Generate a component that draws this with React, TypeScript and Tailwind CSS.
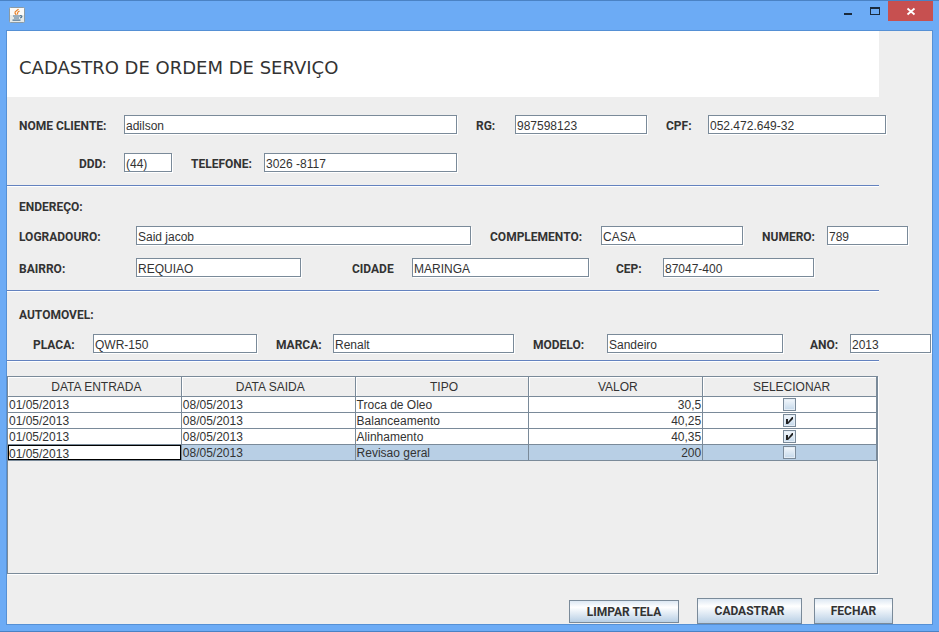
import { ReactNode } from "react";

type FieldProps = {
  id: string;
  label: string;
  value: string;
  labelClass: string;
  grow: string;
};

function Field({ id, label, value, labelClass, grow }: FieldProps) {
  return (
    <>
      <label htmlFor={id} className={`shrink-0 pt-[2px] font-[Roboto,sans-serif] font-bold whitespace-nowrap ${labelClass}`}>
        {label}
      </label>
      <input
        id={id}
        type="text"
        defaultValue={value}
        className={`h-[19px] min-w-0 border border-[#7a8a99] bg-white pt-[2px] pl-px text-xs leading-[15px] shadow-[1px_1px_0_#ffffff] outline-none ${grow}`}
      />
    </>
  );
}

function Row({ children }: { children: ReactNode }) {
  return <div className="flex h-[19px] items-center pl-3">{children}</div>;
}

function Separator() {
  return <hr className="mr-[53px] h-[2px] border-0 border-t border-[#6382bf] bg-white" />;
}

function SectionTitle({ children }: { children: ReactNode }) {
  return <h2 className="pl-3 font-[Roboto,sans-serif] text-xs leading-4 font-bold">{children}</h2>;
}

const columns = ["DATA ENTRADA", "DATA SAIDA", "TIPO", "VALOR", "SELECIONAR"];

const services = [
  { entrada: "01/05/2013", saida: "08/05/2013", tipo: "Troca de Oleo", valor: "30,5", checked: false, selected: false },
  { entrada: "01/05/2013", saida: "08/05/2013", tipo: "Balanceamento", valor: "40,25", checked: true, selected: false },
  { entrada: "01/05/2013", saida: "08/05/2013", tipo: "Alinhamento", valor: "40,35", checked: true, selected: false },
  { entrada: "01/05/2013", saida: "08/05/2013", tipo: "Revisao geral", valor: "200", checked: false, selected: true },
];

const cell = "h-4 overflow-hidden border-r border-b border-[#7a8a99] p-0 whitespace-nowrap";
const cellText = "h-[15px] px-px leading-[17px]";

function ServiceTable() {
  return (
    <table className="w-full table-fixed border-separate border-spacing-0 text-xs">
      <thead>
        <tr>
          {columns.map((name) => (
            <th
              key={name}
              scope="col"
              className="h-5 border-r border-b border-[#7a8a99] p-0 text-center font-normal shadow-[inset_1px_1px_0_#ffffff]"
            >
              <div className="h-[19px] pl-1 leading-[21px]">{name}</div>
            </th>
          ))}
        </tr>
      </thead>
      <tbody>
        {services.map((s, i) => (
          <tr key={i} className={s.selected ? "bg-[#b8cfe5]" : "bg-white"}>
            <td className={cell}>
              {s.selected ? (
                <div className="h-[15px] bg-white px-px leading-[18px] shadow-[inset_0_0_0_1px_#000000]">{s.entrada}</div>
              ) : (
                <div className={cellText}>{s.entrada}</div>
              )}
            </td>
            <td className={cell}>
              <div className={cellText}>{s.saida}</div>
            </td>
            <td className={cell}>
              <div className={cellText}>{s.tipo}</div>
            </td>
            <td className={`${cell} text-right`}>
              <div className={cellText}>{s.valor}</div>
            </td>
            <td className={cell}>
              <div className="grid h-[15px] place-content-center">
                <input
                  type="checkbox"
                  aria-label={`Selecionar ${s.tipo}`}
                  defaultChecked={s.checked}
                  className="peer col-start-1 row-start-1 size-[13px] appearance-none border border-[#7a8a99] bg-linear-to-b from-[#f4f8fc] to-[#c4d8ea] shadow-[inset_0_0_0_1px_#e4edf6]"
                />
                <svg
                  viewBox="0 0 13 13"
                  className="pointer-events-none invisible col-start-1 row-start-1 size-[13px] peer-checked:visible"
                  fill="#222222"
                  aria-hidden="true"
                >
                  <path d="M3 5h2v3L9 3h1v2L5 10H3z" />
                </svg>
              </div>
            </td>
          </tr>
        ))}
      </tbody>
    </table>
  );
}

function JavaIcon() {
  return (
    <svg viewBox="0 0 16 16" className="size-4" aria-hidden="true">
      <rect x="0.5" y="0.5" width="15" height="15" rx="1" fill="#e6eae8" stroke="#8a9aa5" />
      <rect x="1" y="1" width="14" height="7" fill="#fafaf8" />
      <path d="M9.500 2C8.500 3.500 5.500 4 6 6c.2.800 1.200 1 1 2M10.500 4C8.500 5 8 5.500 8.800 7.500" fill="none" stroke="#e8832c" strokeWidth="1.200" />
      <path d="M4 9h7M5 11h5M3.500 13.200h8M11 8.800c2.500-.6 2.500 1.600 0 2.200" fill="none" stroke="#4f7391" strokeWidth="1.200" />
    </svg>
  );
}

function TitleBar() {
  return (
    <header className="flex h-[29px] items-start pl-[9px]">
      <div className="pt-[6px]">
        <JavaIcon />
      </div>
      <div className="ml-auto flex pr-[6px]">
        <button type="button" aria-label="Minimizar" className="h-5 w-[27px]">
          <svg viewBox="0 0 27 20" className="h-5 w-[27px]" aria-hidden="true">
            <path d="M10 12h8v2h-8z" fill="#1a2a3c" />
          </svg>
        </button>
        <button type="button" aria-label="Maximizar" className="h-5 w-[27px]">
          <svg viewBox="0 0 27 20" className="h-5 w-[27px]" aria-hidden="true">
            <path d="M9 6h10v8H9zM10 8v5h8V8z" fill="#1a2a3c" fillRule="evenodd" />
          </svg>
        </button>
        <button type="button" aria-label="Fechar janela" className="h-5 w-[45px] bg-[#c75050]">
          <svg viewBox="0 0 45 20" className="h-5 w-[45px]" aria-hidden="true">
            <path d="M19.500 7.500l7 6M26.500 7.500l-7 6" stroke="#ffffff" strokeWidth="1.800" />
          </svg>
        </button>
      </div>
    </header>
  );
}

const buttonBase =
  "border border-[#7a8a99] bg-linear-to-b from-[#dde8f3] via-[#ffffff] via-30% to-[#b8cfe5] font-[Roboto,sans-serif] text-xs font-bold whitespace-nowrap";

export default function App() {
  return (
    <div className="flex min-h-screen flex-col border-t border-b border-[#4a82c4] bg-[#6cabf5] font-['Liberation_Sans',Arial,sans-serif] text-xs text-[#333333]">
      <TitleBar />
      <main className="mx-[6px] mb-[6px] flex grow flex-col border border-[#5590d5] bg-[#eeeeee]">
        <div className="mr-[53px] flex h-[66px] items-center bg-white pt-2 pl-3">
          <h1 className="font-['DejaVu_Sans',Verdana,sans-serif] text-lg leading-6">CADASTRO DE ORDEM DE SERVIÇO</h1>
        </div>

        <form className="flex grow flex-col">
          <div className="flex flex-col gap-[19px] pt-[18px] pb-[13px]">
            <Row>
              <Field id="nome" label="NOME CLIENTE:" value="adilson" labelClass="w-[105px]" grow="flex-[330]" />
              <Field id="rg" label="RG:" value="987598123" labelClass="ml-[19px] w-[39px]" grow="flex-[129]" />
              <Field id="cpf" label="CPF:" value="052.472.649-32" labelClass="ml-[19px] w-[42px]" grow="flex-[175]" />
              <div className="w-[46px] shrink-0" />
            </Row>
            <Row>
              <Field id="ddd" label="DDD:" value="(44)" labelClass="w-[105px] pl-[60px]" grow="flex-[45]" />
              <Field id="telefone" label="TELEFONE:" value="3026 -8117" labelClass="ml-[19px] w-[73px]" grow="flex-[190]" />
              <div className="flex-[475]" />
            </Row>
          </div>
          <Separator />

          <div className="pt-3 pb-[11px]">
            <SectionTitle>ENDEREÇO:</SectionTitle>
          </div>
          <div className="flex flex-col gap-[13px] pb-[13px]">
            <Row>
              <Field id="logradouro" label="LOGRADOURO:" value="Said jacob" labelClass="w-[117px]" grow="flex-[332]" />
              <Field id="complemento" label="COMPLEMENTO:" value="CASA" labelClass="ml-[19px] w-[111px]" grow="flex-[139]" />
              <Field id="numero" label="NUMERO:" value="789" labelClass="ml-[19px] w-[65px]" grow="flex-[78]" />
              <div className="w-6 shrink-0" />
            </Row>
            <Row>
              <Field id="bairro" label="BAIRRO:" value="REQUIAO" labelClass="w-[117px]" grow="flex-[162]" />
              <Field id="cidade" label="CIDADE" value="MARINGA" labelClass="ml-[51px] w-[60px]" grow="flex-[174]" />
              <Field id="cep" label="CEP:" value="87047-400" labelClass="ml-[27px] w-[47px]" grow="flex-[148]" />
              <div className="flex-[118]" />
            </Row>
          </div>
          <Separator />

          <div className="pt-[15px] pb-[11px]">
            <SectionTitle>AUTOMOVEL:</SectionTitle>
          </div>
          <div className="pb-[7px]">
            <Row>
              <Field id="placa" label="PLACA:" value="QWR-150" labelClass="w-[74px] pl-[14px]" grow="flex-[161]" />
              <Field id="marca" label="MARCA:" value="Renalt" labelClass="ml-[19px] w-[57px]" grow="flex-[178]" />
              <Field id="modelo" label="MODELO:" value="Sandeiro" labelClass="ml-[19px] w-[74px]" grow="flex-[173]" />
              <Field id="ano" label="ANO:" value="2013" labelClass="ml-[27px] w-[40px]" grow="flex-[78]" />
              <div className="w-px shrink-0" />
            </Row>
          </div>
          <Separator />

          <div className="mt-[14px] mr-[54px] grow border border-[#7a8a99] shadow-[1px_1px_0_#ffffff]">
            <ServiceTable />
          </div>

          <div className="mt-6 mr-[39px] flex items-end justify-end">
            <button type="reset" className={`mb-px h-[23px] w-[110px] ${buttonBase}`}>
              LIMPAR TELA
            </button>
            <button type="button" className={`ml-[18px] h-[26px] w-[105px] ${buttonBase}`}>
              CADASTRAR
            </button>
            <button type="button" className={`ml-3 h-[26px] w-[79px] ${buttonBase}`}>
              FECHAR
            </button>
          </div>
        </form>
      </main>
    </div>
  );
}
